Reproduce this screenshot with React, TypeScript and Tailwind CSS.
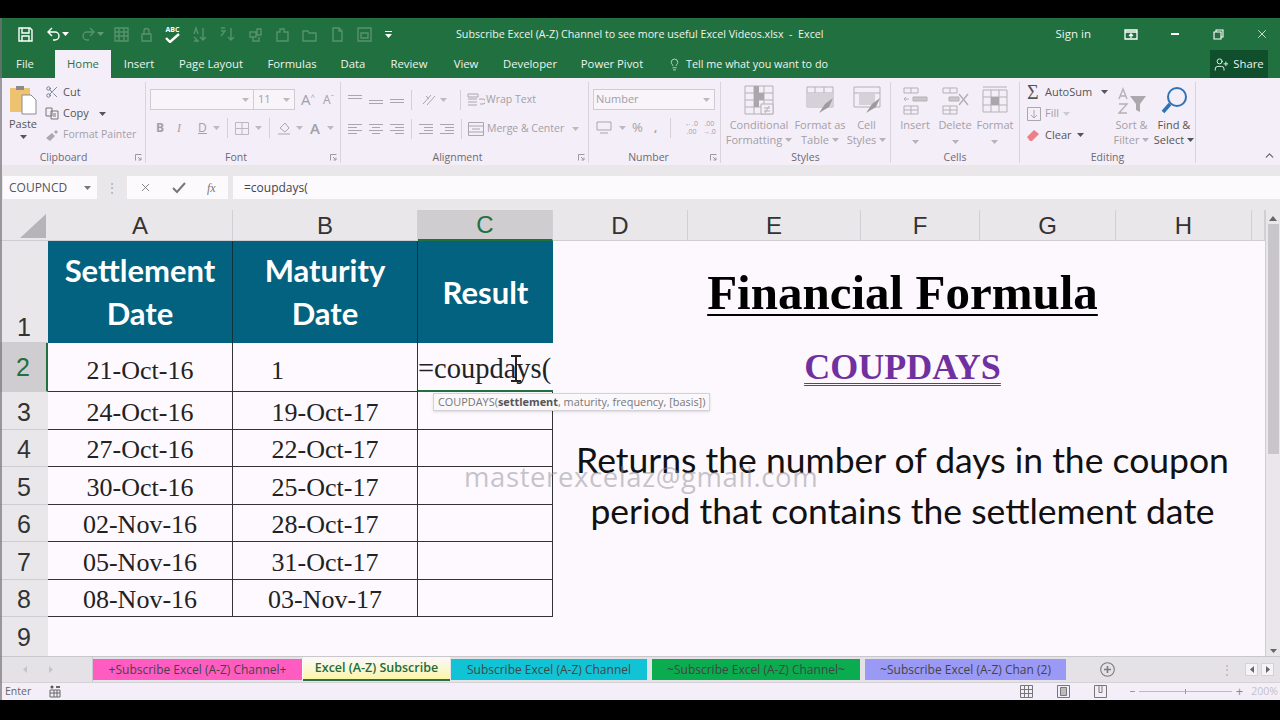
import { ChevronUp, Lightbulb, Scissors, UserPlus, X } from 'lucide-react'
import type { ReactNode } from 'react'

const ui = { fontFamily: '"Open Sans", sans-serif' }
const calibri = { fontFamily: 'Lato, sans-serif' }
const serif = { fontFamily: '"Liberation Serif", serif' }
const arial = { fontFamily: '"Liberation Sans", sans-serif' }

const Caret = ({ color = '#9a979c' }: { color?: string }) => (
  <svg width="7" height="4" viewBox="0 0 7 4" className="shrink-0"><path d="M0 0h7L3.5 4z" fill={color} /></svg>
)

// quick access toolbar glyphs, faded ones are disabled commands
function Qat({ d, w = 27, op = 0.24 }: { d: string; w?: number; op?: number }) {
  return (
    <div className="flex justify-center shrink-0" style={{ width: w }}>
      <svg width="17" height="17" viewBox="0 0 17 17" fill="none" stroke="#fff" strokeWidth="1.4" opacity={op}><path d={d} /></svg>
    </div>
  )
}

function TitleBar() {
  return (
    <div className="h-[32px] bg-[#21703f] flex items-center text-[#eef3ef] text-[10.7px] shrink-0" style={ui}>
      <div className="w-[456px] flex items-center pl-[16px] shrink-0">
        <Qat w={18} op={1} d="M2 2h11l2 2v11H2zM5 2v5h7V2M5 15v-5h7v5" />
        <div className="w-[10px]" />
        <Qat w={18} op={1} d="M7 2L3 6l4 4M3 6h7a4 4 0 0 1 0 8H8" />
        <Caret color="#fff" />
        <div className="w-[10px]" />
        <Qat w={18} d="M10 2l4 4-4 4M14 6H7a4 4 0 0 0 0 8h2" />
        <div className="mr-[5px]"><Caret color="#5f9a79" /></div>
        <Qat w={25} d="M2 2h13v13H2zM2 6h13M2 10h13M6 2v13M11 2v13" />
        <Qat w={24} d="M4 8h9v7H4zM6 8V5a2.5 2.5 0 0 1 5 0v3" />
        <div className="w-[29px] flex flex-col items-center shrink-0 text-white leading-none">
          <span className="text-[7px] font-bold">ABC</span>
          <svg width="15" height="10" viewBox="0 0 15 10" fill="none" stroke="#fff" strokeWidth="2.4"><path d="M1 5l4 4 9-8" /></svg>
        </div>
        <Qat w={25} d="M3 8l2-6 2 6M3 15h4l-4-4M12 2v12M9 11l3 3 3-3" />
        <Qat w={30} d="M2 2h4M2 5h4l-4 5M12 2v12M9 11l3 3 3-3" />
        <Qat w={27} d="M3 6h6v5H3zM10 3h4v6h-4zM6 11v4h6v-4" />
        <Qat w={27} d="M3 6h3V3h4v3h4v9H3z" />
        <Qat w={27} d="M2 5h5l1 2h7v8H2z" />
        <Qat w={29} d="M4 2h6l3 3v10H4zM10 2v3h3" />
        <Qat w={25} d="M2 2h13v13H2zM5 7h7v5H5z" />
        <div className="flex flex-col items-center gap-[2px] ml-[8px]">
          <div className="w-[7px] h-[1px] bg-white" />
          <Caret color="#fff" />
        </div>
      </div>
      <span className="whitespace-nowrap">Subscribe Excel (A-Z) Channel to see more useful Excel Videos.xlsx&nbsp; -&nbsp; Excel</span>
      <div className="ml-auto flex items-center text-[11.5px]">
        <span className="whitespace-nowrap">Sign in</span>
        <div className="w-[80px] flex justify-center">
          <svg width="14" height="11" viewBox="0 0 14 11" fill="none" stroke="#fff" strokeWidth="1.3"><path d="M1 1h12v9H1zM1 3h12M7 9V5M5 7l2-2 2 2" /></svg>
        </div>
        <div className="w-[8px] h-[1.5px] bg-white mr-[34px]" />
        <svg width="11" height="11" viewBox="0 0 11 11" fill="none" stroke="#fff" strokeWidth="1.1" className="mr-[31px]"><path d="M1 3h7v7H1zM3 3V1h7v7H8" /></svg>
        <X className="w-[14px] h-[14px] mr-[11px]" strokeWidth={1.4} />
      </div>
    </div>
  )
}

const TABS: Array<[string, number]> = [
  ['Insert', 56], ['Page Layout', 88], ['Formulas', 74], ['Data', 48], ['Review', 64],
  ['View', 50], ['Developer', 78], ['Power Pivot', 86],
]

function TabRow() {
  return (
    <div className="h-[28px] bg-[#21703f] flex items-stretch text-[#eef3ef] text-[11.3px] shrink-0" style={ui}>
      <div className="w-[55px] flex items-center justify-center pr-[5px]">File</div>
      <div className="w-[56px] bg-[#f4eef8] text-[#2a7148] flex items-center justify-center">Home</div>
      {TABS.map(([t, w]) => (
        <div key={t} className="flex items-center justify-center whitespace-nowrap" style={{ width: w }}>{t}</div>
      ))}
      <div className="flex items-center gap-[5px] ml-[13px] text-[10.8px]">
        <Lightbulb className="w-[13px] h-[13px]" strokeWidth={1.3} />
        <span className="whitespace-nowrap">Tell me what you want to do</span>
      </div>
      <div className="ml-auto mr-[12px] w-[58px] bg-[#0f4f2c] flex items-center justify-center gap-[4px]">
        <UserPlus className="w-[15px] h-[15px]" strokeWidth={1.5} />
        <span>Share</span>
      </div>
    </div>
  )
}

// ribbon group: fixed width, body above, caption below, divider at right
function Group({ w, label, labelPr = 0, launcher = true, children }: { w: number; label: string; labelPr?: number; launcher?: boolean; children: ReactNode }) {
  return (
    <div className="shrink-0 flex flex-col border-r border-[#d9d4dc] mt-[4px] mb-[2px] relative" style={{ width: w }}>
      <div className="h-[67px] shrink-0 flex items-stretch">{children}</div>
      <div className="text-center text-[10.5px] text-[#6d6a70] leading-[12px] mt-[2px]" style={{ paddingRight: labelPr }}>{label}</div>
      {launcher && (
        <svg width="7" height="7" viewBox="0 0 7 7" className="absolute right-[3px] bottom-[2px]" fill="none" stroke="#9b989e"><path d="M.5 6.5v-6h6M3 3l3 3M6 3.5V6H3.5" /></svg>
      )}
    </div>
  )
}

const Sep = ({ h = 20 }: { h?: number }) => <div className="w-px bg-[#d4cfd8] shrink-0" style={{ height: h }} />

const Bars = ({ lines }: { lines: Array<[number, number]> }) => (
  <svg width="14" height="12" viewBox="0 0 14 12" stroke="#a9a6ac" strokeWidth="1" className="shrink-0">
    {lines.map(([a, b], i) => <path key={i} d={`M${a} ${i * 3 + 1.5}H${b}`} />)}
  </svg>
)

function BigButton({ w, lines, caret = true, dark, icon }: { w: number; lines: string[]; caret?: boolean; dark?: boolean; icon: ReactNode }) {
  return (
    <div className={`flex flex-col items-center shrink-0 ${dark ? 'text-[#555]' : 'text-[#a3a0a6]'}`} style={{ width: w }}>
      <div className="h-[33px] flex items-end justify-center">{icon}</div>
      <div className="text-[11px] leading-[15px] text-center whitespace-nowrap mt-[2px]">
        {lines[0]}<br />
        <span className="inline-flex items-center gap-[3px] h-[15px]">{lines[1]}{caret && <Caret color={dark ? '#555' : '#b5b2b8'} />}</span>
      </div>
    </div>
  )
}

const sheetIcon = 'M1 1h28v28H1zM1 8h28M1 15h28M1 22h28M10 1v28M20 1v28'

function Ribbon() {
  return (
    <div className="h-[87px] bg-[#f4eef8] flex items-stretch shrink-0 text-[11px]" style={ui}>
      <Group w={146} label="Clipboard" labelPr={18}>
        <div className="w-[44px] flex flex-col items-center pl-[2px] text-[#555]">
          <svg width="28" height="31" viewBox="0 0 28 31" className="mt-[3px]">
            <path d="M1 3h20v24H1z" fill="#eec36f" />
            <path d="M7 1h8v4H7z" fill="#8d8a8f" />
            <path d="M13 10h9l5 5v14H13z" fill="#fff" stroke="#8d8a8f" />
          </svg>
          <span className="leading-[15px]">Paste</span>
          <div className="mt-[4px]"><Caret color="#555" /></div>
        </div>
        <div className="flex flex-col pl-[1px] gap-[5.5px] pt-[2px]">
          <div className="flex items-center gap-[4px] h-[16px] text-[#555]">
            <Scissors className="w-[14px] h-[14px] text-[#5d6f88]" strokeWidth={1.4} /><span>Cut</span>
          </div>
          <div className="flex items-center gap-[4px] h-[16px] text-[#555]">
            <svg width="14" height="13" viewBox="0 0 14 13" fill="none" stroke="#777" strokeWidth="1"><path d="M1 1h6v8H1zM6 4h7v8H6zM8 7h3M8 9h3" /></svg>
            <span>Copy</span><span className="ml-[6px]"><Caret color="#555" /></span>
          </div>
          <div className="flex items-center gap-[4px] h-[16px] text-[#a3a0a6] whitespace-nowrap text-[10.5px]">
            <svg width="14" height="13" viewBox="0 0 14 13"><path d="M1 9l6-5 3 3-5 5zM9 3l2-2 2 2-2 2z" fill="#aaa7ad" /></svg>
            <span>Format Painter</span>
          </div>
        </div>
      </Group>

      <Group w={195} label="Font" labelPr={14}>
        <div className="flex flex-col pl-[4px] pt-[7px] gap-[7px] text-[#a3a0a6]">
          <div className="flex items-center h-[21px]">
            <div className="w-[104px] h-full border border-[#cfcad3] bg-[#f8f4fa] flex items-center justify-end pr-[4px]"><Caret color="#bbb" /></div>
            <div className="w-[41px] h-full border border-[#cfcad3] border-l-0 bg-[#f8f4fa] flex items-center justify-between px-[4px]"><span>11</span><Caret color="#bbb" /></div>
            <span className="ml-[6px] text-[15px] leading-none">A</span><span className="text-[8px] self-start mt-[2px]">^</span>
            <span className="ml-[8px] text-[12px] leading-none">A</span><span className="text-[8px] self-start mt-[2px]">ˇ</span>
          </div>
          <div className="flex items-center h-[22px] pl-[6px] text-[12px]">
            <span className="w-[21px] font-bold">B</span>
            <span className="w-[21px] italic" style={serif}>I</span>
            <span className="w-[15px] underline">D</span>
            <Caret color="#bbb" />
            <div className="mx-[7px]"><Sep /></div>
            <svg width="14" height="13" viewBox="0 0 14 13" fill="none" stroke="#bbb8be" className="mr-[6px]"><path d="M.5.5h13v12H.5zM7 .5v12M.5 6.5h13" /></svg>
            <Caret color="#bbb" />
            <div className="mx-[7px]"><Sep /></div>
            <svg width="15" height="14" viewBox="0 0 15 14" fill="none" stroke="#aaa7ad" className="mr-[4px]"><path d="M3 7l5-5 4 5-4 4zM1 13h12" /></svg>
            <Caret color="#bbb" />
            <span className="ml-[7px] mr-[7px] text-[15px] font-semibold">A</span>
            <Caret color="#bbb" />
          </div>
        </div>
      </Group>

      <Group w={248} label="Alignment" labelPr={14}>
        <div className="flex flex-col pl-[7px] pt-[8px] gap-[9px] text-[#a3a0a6] text-[10.5px]">
          <div className="flex items-center gap-[7px] h-[20px]">
            <Bars lines={[[0, 14], [0, 14], [20, 20]]} />
            <div className="mt-[4px]"><Bars lines={[[20, 20], [0, 14], [0, 14]]} /></div>
            <div className="mt-[8px]"><Bars lines={[[0, 14], [0, 14], [20, 20]]} /></div>
            <Sep />
            <svg width="16" height="14" viewBox="0 0 16 14" fill="none" stroke="#aaa7ad" className="ml-[2px]"><path d="M2 11l8-9M6 12l8-9M5 3l3 3" /></svg>
            <div className="ml-[-4px]"><Caret color="#bbb" /></div>
            <div className="ml-[6px]"><Sep /></div>
            <svg width="18" height="14" viewBox="0 0 18 14" fill="none" stroke="#aaa7ad" className="ml-[-1px]"><path d="M1 1h10v3H1zM1 6h9M1 9h9M1 12h9M12 6h4a2 2 0 0 1 0 5h-3" /></svg>
            <span className="ml-[-6px] whitespace-nowrap">Wrap Text</span>
          </div>
          <div className="flex items-center gap-[7px] h-[20px]">
            <Bars lines={[[0, 14], [0, 9], [0, 14], [0, 9]]} />
            <Bars lines={[[0, 14], [3, 11], [0, 14], [3, 11]]} />
            <Bars lines={[[0, 14], [5, 14], [0, 14], [5, 14]]} />
            <Sep />
            <Bars lines={[[0, 14], [5, 14], [5, 14], [0, 14]]} />
            <Bars lines={[[0, 14], [5, 14], [5, 14], [0, 14]]} />
            <Sep />
            <svg width="16" height="14" viewBox="0 0 16 14" fill="none" stroke="#aaa7ad" className="ml-[-1px]"><path d="M.5.5h15v13H.5zM.5 4h15M.5 10h15M4 7h8" /></svg>
            <span className="ml-[-4px] whitespace-nowrap">Merge &amp; Center</span>
            <span className="ml-[1px]"><Caret color="#bbb" /></span>
          </div>
        </div>
      </Group>

      <Group w={132} label="Number" labelPr={12}>
        <div className="flex flex-col pl-[4px] pt-[7px] gap-[7px] text-[#a3a0a6]">
          <div className="w-[122px] h-[21px] border border-[#cfcad3] bg-[#f8f4fa] flex items-center justify-between px-[2px] pr-[4px]">
            <span>Number</span><Caret color="#bbb" />
          </div>
          <div className="flex items-center h-[22px] pl-[3px]">
            <svg width="16" height="14" viewBox="0 0 16 14" fill="none" stroke="#aaa7ad" className="mr-[7px]"><path d="M1 1h14v8H1zM4 12h8" /></svg>
            <Caret color="#bbb" />
            <span className="ml-[6px] w-[22px] text-[13px]">%</span>
            <span className="w-[16px] font-bold">,</span>
            <Sep />
            <span className="ml-[9px] w-[23px] text-[7px] leading-[8px] text-center">←.0<br />.00</span>
            <span className="text-[7px] leading-[8px] text-center">.00<br />→.0</span>
          </div>
        </div>
      </Group>

      <Group w={170} label="Styles" launcher={false}>
        <div className="flex">
          <BigButton w={76} lines={['Conditional', 'Formatting']} icon={
            <svg width="30" height="30" viewBox="0 0 30 30" fill="none" stroke="#b4b1b7"><path d={sheetIcon} /><path d="M10 1h5v7h5v7h-5v7h-5z" fill="#a9a6ac" stroke="none" /><path d="M17 19h12v10H17z" fill="#f4eef8" /><path d="M20 23h6M20 26h6M25 21l-4 7" /></svg>
          } />
          <BigButton w={46} lines={['Format as', 'Table']} icon={
            <svg width="30" height="30" viewBox="0 0 30 30" fill="none" stroke="#b4b1b7"><path d="M2 2h26v20H2zM2 8h26M2 14h26M10 2v20M19 2v20" /><path d="M2 8h26v14H2z" fill="#d5d1d9" stroke="none" /><path d="M14 28l6-9 8-6-4 9z" fill="#9c999f" stroke="none" /></svg>
          } />
          <BigButton w={47} lines={['Cell', 'Styles']} icon={
            <svg width="30" height="30" viewBox="0 0 30 30" fill="none" stroke="#b4b1b7"><path d="M2 2h26v20H2zM2 8h26" /><path d="M7 9h16v11H7z" fill="#d5d1d9" stroke="none" /><path d="M14 28l6-9 8-6-4 9z" fill="#9c999f" stroke="none" /></svg>
          } />
        </div>
      </Group>

      <Group w={129} label="Cells" launcher={false}>
        <div className="flex pl-[4px]">
          <BigButton w={40} lines={['Insert', '']} icon={
            <svg width="26" height="28" viewBox="0 0 26 28" fill="none" stroke="#b4b1b7"><path d="M2 1h14v5H2zM9 1v5M2 19h14v8H2zM2 23h14M9 19v8M2 12h5M4 10l-2 2 2 2" /><path d="M11 10h14v4H11z" fill="#c8c5cb" /></svg>
          } />
          <BigButton w={40} lines={['Delete', '']} icon={
            <svg width="28" height="28" viewBox="0 0 28 28" fill="none" stroke="#b4b1b7"><path d="M2 1h14v5H2zM9 1v5M2 19h14v8H2zM2 23h14M9 19v8" /><path d="M8 10h10v4H8z" fill="#c8c5cb" /><path d="M18 7l9 11M27 7l-9 11" strokeWidth="1.5" /></svg>
          } />
          <BigButton w={40} lines={['Format', '']} icon={
            <svg width="28" height="30" viewBox="0 0 28 30" fill="none" stroke="#b4b1b7"><path d="M2 5h24v22H2zM10 5v22M18 5v22M2 12h24M2 20h24M2 2h24" /><path d="M10 12h8v8h-8z" fill="#a9a6ac" stroke="none" /></svg>
          } />
        </div>
      </Group>

      <Group w={176} label="Editing" launcher={false}>
        <div className="flex">
          <div className="w-[90px] flex flex-col pl-[7px] pt-[2px] gap-[5.5px] shrink-0">
            <div className="flex items-center gap-[3px] h-[16px] text-[#555]">
              <span className="text-[20px] leading-none w-[15px]" style={serif}>Σ</span><span>AutoSum</span><span className="ml-[6px]"><Caret color="#555" /></span>
            </div>
            <div className="flex items-center gap-[4px] h-[16px] text-[#a3a0a6]">
              <svg width="14" height="14" viewBox="0 0 14 14" fill="none" stroke="#aaa7ad"><path d="M.5.5h13v13H.5zM7 3v8M4 8l3 3 3-3" /></svg>
              <span>Fill</span><Caret color="#ccc" />
            </div>
            <div className="flex items-center gap-[5px] h-[16px] text-[#555]">
              <svg width="13" height="13" viewBox="0 0 13 13"><path d="M0 8l7-7 5 4-7 7H3z" fill="#ec7f88" /></svg>
              <span>Clear</span><Caret color="#555" />
            </div>
          </div>
          <BigButton w={43} lines={['Sort &', 'Filter']} icon={
            <svg width="30" height="28" viewBox="0 0 30 28" fill="none" stroke="#b4b1b7" strokeWidth="1.4"><path d="M2 12l4-10 4 10M3.5 9h5M2 17h8L2 26h8" /><path d="M13 9h16l-6 8v8l-4-2v-6z" fill="#aaa7ad" stroke="none" /></svg>
          } />
          <BigButton w={42} dark lines={['Find &', 'Select']} icon={
            <svg width="27" height="29" viewBox="0 0 27 29" fill="none"><circle cx="16" cy="11" r="9" stroke="#2f72b6" strokeWidth="2" /><path d="M9 18l-7 8" stroke="#2f72b6" strokeWidth="3.5" /></svg>
          } />
        </div>
      </Group>

      <div className="flex-1 flex items-end justify-end pr-[4px] pb-[3px]">
        <ChevronUp className="w-[13px] h-[13px] text-[#666]" strokeWidth={2.2} />
      </div>
    </div>
  )
}

function FormulaBar() {
  return (
    <div className="h-[45px] bg-[#e9e7ea] pt-[11px] pl-[3px] flex items-start shrink-0 text-[12px] text-[#555]" style={ui}>
      <div className="w-[94px] h-[23px] bg-[#fdfafe] flex items-center justify-between pl-[6px] pr-[6px]">
        <span>COUPNCD</span><Caret color="#777" />
      </div>
      <div className="w-[30px] h-[23px] flex items-center justify-center text-[#aaa]">⋮</div>
      <div className="w-[101px] h-[23px] bg-[#fdfafe] flex items-center text-[#777]">
        <X className="w-[13px] h-[13px] ml-[12px]" strokeWidth={1.6} />
        <svg width="14" height="12" viewBox="0 0 14 12" fill="none" stroke="#777" strokeWidth="2" className="ml-[20px]"><path d="M1 6l4 4 8-9" /></svg>
        <span className="ml-[21px] italic text-[12px]" style={serif}>fx</span>
      </div>
      <div className="ml-[5px] flex-1 h-[23px] bg-[#fdfafe] flex items-center pl-[11px] text-[#444]">=coupdays(</div>
    </div>
  )
}

const COLS = ['A', 'B', 'C', 'D', 'E', 'F', 'G', 'H', '']
const DATES: Array<[string, string]> = [
  ['24-Oct-16', '19-Oct-17'],
  ['27-Oct-16', '22-Oct-17'],
  ['30-Oct-16', '25-Oct-17'],
  ['02-Nov-16', '28-Oct-17'],
  ['05-Nov-16', '31-Oct-17'],
  ['08-Nov-16', '03-Nov-17'],
]

const headCell = 'bg-[#03627f] text-white font-bold text-[31px] leading-[43px] flex items-center justify-center text-center'
const dateCell = 'text-[26px] text-[#222] flex items-center border-r border-b border-[#333] bg-[#fdf9ff]'
const rowHead = 'text-[25px] leading-[30px] flex justify-center'

function Sheet() {
  return (
    <div className="relative h-[446px] bg-[#fcf8fe] flex shrink-0">
      <div
        className="w-[1265px] grid shrink-0"
        style={{ gridTemplateColumns: '48px 185px 185px 135px 135px 173px 119px 136px 136px 13px', gridTemplateRows: '31px 102px 49px 38px 37px 38px 37px 38px 37px 39px', ...calibri }}
      >
        <div className="bg-[#e9e7ea] flex items-end justify-end pr-[2px] pb-[2px] border-b border-[#cfcdd1]">
          <svg width="26" height="24" viewBox="0 0 26 24"><path d="M26 0v24H0z" fill="#b6b4b8" /></svg>
        </div>
        {COLS.map((c, i) => (
          <div
            key={c + i}
            className={`flex items-center justify-center pt-[1px] text-[24px] border-r border-[#d2d0d4] ${c === 'C' ? 'bg-[#cfcdd0] text-[#21703f] border-b-2 border-b-[#21703f]' : 'bg-[#e9e7ea] text-[#333] border-b border-b-[#cfcdd1]'}`}
            style={arial}
          >
            {c}
          </div>
        ))}

        <div className={`${rowHead} items-end bg-[#e9e7ea] text-[#333] border-b border-[#cfcdd1]`} style={arial}>1</div>
        <div className={`${headCell} border-r border-[#10323f]`}>Settlement<br />Date</div>
        <div className={`${headCell} border-r border-[#10323f]`}>Maturity<br />Date</div>
        <div className={headCell}>Result</div>

        <div className="col-start-5 col-span-6 pr-[13px] flex flex-col items-center pt-[24px]" style={{ gridRow: '2 / span 9' }}>
          <div className="text-[49px] font-bold underline underline-offset-[5px] decoration-2 text-black leading-[56px] whitespace-nowrap" style={serif}>Financial Formula</div>
          <div className="text-[36px] font-bold underline decoration-double underline-offset-[4px] decoration-1 text-[#7030a0] leading-[40px] mt-[26px] whitespace-nowrap" style={serif}>COUPDAYS</div>
          <div className="text-[35.5px] text-[#111] leading-[51px] mt-[47px] text-center whitespace-nowrap">
            Returns the number of days in the coupon<br />period that contains the settlement date
          </div>
        </div>

        <div className={`${rowHead} items-center bg-[#cfcdd0] text-[#21703f] border-b border-[#cfcdd1] border-r-2 border-r-[#21703f]`} style={arial}>2</div>
        <div className={`${dateCell} justify-center pt-[6px]`} style={serif}>21-Oct-16</div>
        <div className={`${dateCell} justify-start pl-[38px] pt-[6px]`} style={serif}>
          <span className="w-[12px] overflow-hidden whitespace-nowrap">16-Oct-17</span>
        </div>
        <div className="text-[28.5px] text-[#222] flex items-center pt-[6px] border-b-2 border-[#21703f] bg-[#fdf9ff] whitespace-nowrap overflow-hidden" style={serif}>=coupdays(</div>

        {DATES.map(([a, b], i) => (
          <div key={a} className="contents">
            <div className={`${rowHead} items-center pt-[2px] bg-[#e9e7ea] text-[#333] border-b border-[#cfcdd1]`} style={arial}>{i + 3}</div>
            <div className={`${dateCell} justify-center pt-[3px]`} style={serif}>{a}</div>
            <div className={`${dateCell} justify-center pt-[3px]`} style={serif}>{b}</div>
            <div className={dateCell} />
          </div>
        ))}

        <div className={`${rowHead} items-center pt-[1px] bg-[#e9e7ea] text-[#333]`} style={arial}>9</div>
      </div>

      <div className="flex-1 bg-[#e9e7ea] flex flex-col items-center pt-[6px] pb-[3px] border-l border-[#cfcdd1]">
        <svg width="8" height="5" viewBox="0 0 8 5"><path d="M0 5h8L4 0z" fill="#666" /></svg>
        <div className="w-[11px] h-[230px] bg-[#c8c6ca] mt-[3px]" />
        <div className="mt-auto"><Caret color="#666" /></div>
      </div>

      {/* things floating over the grid */}
      <div className="absolute left-[433px] top-[183px] h-[18px] px-[4px] bg-[#fbf8fc] border border-[#d4d2d6] shadow-sm text-[10.9px] text-[#777] flex items-center whitespace-nowrap" style={ui}>
        COUPDAYS(<b className="text-[#555]">settlement</b>, maturity, frequency, [basis])
      </div>
      <div className="absolute left-[464px] top-[246px] text-[27.5px] text-[#8f8d92]/50 tracking-[0.6px] whitespace-nowrap" style={ui}>masterexcelaz@gmail.com</div>
      <svg className="absolute left-[510px] top-[145px]" width="12" height="27" viewBox="0 0 12 27" fill="none" stroke="#222" strokeWidth="2"><path d="M1 1h10M1 26h10M6 1v25" /></svg>
    </div>
  )
}

const SHEETS_AFTER: Array<[string, number, string]> = [
  ['Subscribe Excel (A-Z) Channel', 196, 'bg-[#10c4d6]'],
  ['~Subscribe Excel (A-Z) Channel~', 208, 'bg-[#0bab50]'],
  ['~Subscribe Excel (A-Z) Chan (2)', 201, 'bg-[#9a9af6]'],
]

function SheetTabs() {
  return (
    <div className="h-[26px] bg-[#e4e2e6] border-t border-[#c9c7cb] flex items-stretch shrink-0 text-[12px] text-[#444]" style={ui}>
      <div className="w-[93px] flex items-center pl-[23px] gap-[22px] border-r border-[#c9c7cb]">
        <svg width="4" height="7" viewBox="0 0 4 7"><path d="M4 0v7L0 3.5z" fill="#c6c4c8" /></svg>
        <svg width="4" height="7" viewBox="0 0 4 7"><path d="M0 0v7l4-3.5z" fill="#c6c4c8" /></svg>
      </div>
      <div className="w-[210px] bg-[#ff5cc2] flex items-center justify-center whitespace-nowrap my-[2px] border-r border-[#fff]">+Subscribe Excel (A-Z) Channel+</div>
      <div className="w-[147px] mr-[1px] bg-gradient-to-b from-[#fbf8fc] to-[#fbf6a8] border-b-2 border-[#2b6e48] text-[#1f6b40] text-[12.5px] font-semibold flex items-center justify-center whitespace-nowrap mb-[1px]">Excel (A-Z) Subscribe</div>
      {SHEETS_AFTER.map(([t, w, c]) => (
        <div key={t} className={`${c} flex items-center justify-center whitespace-nowrap my-[2px] mr-[5px]`} style={{ width: w }}>{t}</div>
      ))}
      <div className="flex items-center ml-[29px]">
        <svg width="15" height="15" viewBox="0 0 15 15" fill="none" stroke="#7c7a7f" strokeWidth="1.1"><circle cx="7.5" cy="7.5" r="6.8" /><path d="M7.5 4v7M4 7.5h7" strokeWidth="1.6" /></svg>
      </div>
      <div className="ml-auto flex items-center pr-[6px]">
        <span className="text-[#b5b3b8] mr-[12px]">⋮</span>
        <div className="w-[13px] h-[13px] bg-[#f6f3f8] border border-[#d4d2d6] flex items-center justify-center mr-[3px]"><svg width="4" height="7" viewBox="0 0 4 7"><path d="M4 0v7L0 3.5z" fill="#666" /></svg></div>
        <div className="w-[13px] h-[13px] bg-[#f6f3f8] border border-[#d4d2d6] flex items-center justify-center"><svg width="4" height="7" viewBox="0 0 4 7"><path d="M0 0v7l4-3.5z" fill="#666" /></svg></div>
      </div>
    </div>
  )
}

function StatusBar() {
  return (
    <div className="h-[18px] bg-[#f4eef8] border-t border-[#d4d2d6] flex items-center shrink-0 text-[10.5px] text-[#666]" style={ui}>
      <span className="ml-[5px]">Enter</span>
      <svg width="12" height="13" viewBox="0 0 12 13" fill="none" stroke="#666" className="ml-[18px]"><path d="M1 5h10v7H1zM1 8h10M5 5v7M8 5v7" /><circle cx="3" cy="2" r="1.5" fill="#555" stroke="none" /><path d="M7 2h4" strokeWidth="2" /></svg>
      <div className="ml-auto flex items-center">
        <svg width="13" height="13" viewBox="0 0 13 13" fill="none" stroke="#777"><path d="M.5.5h12v12H.5zM4.5.5v12M8.5.5v12M.5 4.5h12M.5 8.5h12" /></svg>
        <svg width="13" height="13" viewBox="0 0 13 13" fill="none" stroke="#777" className="ml-[24px]"><path d="M.5.5h12v12H.5z" /><path d="M3.5 2.5h6v8h-6z" fill="#bbb" /></svg>
        <svg width="13" height="13" viewBox="0 0 13 13" fill="none" stroke="#777" className="ml-[24px]"><path d="M.5.5h12v12H.5zM5 .5v7h3v-7" /></svg>
        <div className="ml-[23px] w-[5px] h-px bg-[#999]" />
        <div className="ml-[4px] w-[93px] h-px bg-[#bbb] relative"><div className="absolute left-[46px] -top-[2px] w-px h-[5px] bg-[#999]" /></div>
        <span className="ml-[4px] text-[#888] text-[13px] leading-none">+</span>
        <span className="ml-[8px] mr-[2px] text-[#c4c2c6]">200%</span>
      </div>
    </div>
  )
}

export default function App() {
  return (
    <div className="relative w-[1280px] h-[720px] bg-black overflow-hidden flex flex-col">
      <div className="h-[18px] shrink-0" />
      <TitleBar />
      <TabRow />
      <Ribbon />
      <FormulaBar />
      <Sheet />
      <SheetTabs />
      <StatusBar />
      <div className="absolute left-0 top-[18px] w-[2px] h-[682px] bg-[#77757a]/70" />
    </div>
  )
}
